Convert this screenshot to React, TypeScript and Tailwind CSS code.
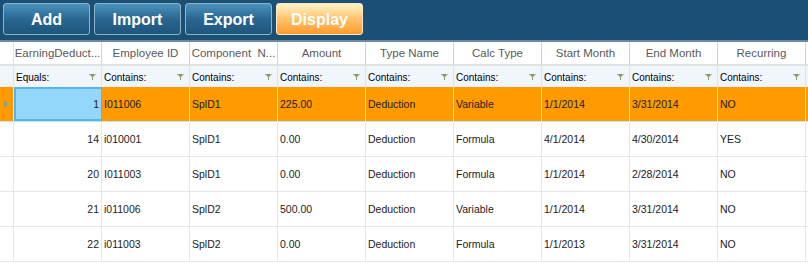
import React from "react";

const COLUMNS = [
  { title: "EarningDeduct...", op: "Equals:" },
  { title: "Employee ID", op: "Contains:" },
  { title: "Component  N...", op: "Contains:" },
  { title: "Amount", op: "Contains:" },
  { title: "Type Name", op: "Contains:" },
  { title: "Calc Type", op: "Contains:" },
  { title: "Start Month", op: "Contains:" },
  { title: "End Month", op: "Contains:" },
  { title: "Recurring", op: "Contains:" },
];

const ROWS = [
  ["1", "I011006", "SplD1", "225.00", "Deduction", "Variable", "1/1/2014", "3/31/2014", "NO"],
  ["14", "i010001", "SplD1", "0.00", "Deduction", "Formula", "4/1/2014", "4/30/2014", "YES"],
  ["20", "I011003", "SplD1", "0.00", "Deduction", "Formula", "1/1/2014", "2/28/2014", "NO"],
  ["21", "i011006", "SplD2", "500.00", "Deduction", "Variable", "1/1/2014", "3/31/2014", "NO"],
  ["22", "i011003", "SplD2", "0.00", "Deduction", "Formula", "1/1/2013", "3/31/2014", "NO"],
];

const GRID = "grid grid-cols-[14px_repeat(9,88px)_2px]";

function Funnel() {
  return (
    <svg width="7" height="6" viewBox="0 0 7 6" className="shrink-0">
      <path d="M0 0h7L4 3v3H3V3z" fill="#8c9a6c" />
    </svg>
  );
}

function ToolButton({ label, active }: { label: string; active?: boolean }) {
  return (
    <button
      className={
        active
          ? "h-[32px] w-[87px] rounded-[3px] border border-[#ffe7c2] bg-gradient-to-b from-[#fff4c8] via-[#ffc268] to-[#ff9a2a] pt-[1px] text-[16px] font-bold text-white"
          : "h-[32px] w-[87px] rounded-[3px] border border-[#8fb3cc] bg-gradient-to-b from-[#4a93bd] via-[#2a6791] to-[#1d557d] pt-[1px] text-[16px] font-bold text-white"
      }
    >
      {label}
    </button>
  );
}

export default function App() {
  return (
    <div
      className="h-[264px] w-[808px] overflow-hidden bg-white text-[10.5px] text-[#222]"
      style={{ fontFamily: '"Liberation Sans", Arial, sans-serif' }}
    >
      {/* toolbar */}
      <div className="flex h-[42px] gap-[4px] border-b-2 border-[#6d8aa0] bg-[#1b4f74] pl-[3px] pt-[3px]">
        <ToolButton label="Add" />
        <ToolButton label="Import" />
        <ToolButton label="Export" />
        <ToolButton label="Display" active />
      </div>

      {/* header */}
      <div className={`${GRID} h-[24px] border-b-2 border-[#e2e2e2] bg-white`}>
        <div className="border-r border-[#e2e2e2]" />
        {COLUMNS.map((c) => (
          <div
            key={c.title}
            className="flex items-center justify-center overflow-hidden whitespace-pre border-r border-[#d8d4c4] pt-[2px] text-[11.5px] text-[#5a5a5a]"
          >
            {c.title}
          </div>
        ))}
        <div />
      </div>

      {/* filter row */}
      <div className={`${GRID} h-[21px] bg-[#f1f6fc]`}>
        <div className="border-r border-[#e2e2e2]" />
        {COLUMNS.map((c) => (
          <div
            key={c.title}
            className="flex items-center justify-between border-r border-[#e2e2e2] pl-[2px] pr-[5px] pt-[1px] text-[10px] text-black"
          >
            <span>{c.op}</span>
            <Funnel />
          </div>
        ))}
        <div />
      </div>

      {/* data rows */}
      {ROWS.map((row, ri) => {
        const selected = ri === 0;
        return (
          <div
            key={row[0]}
            className={`${GRID} h-[35px] border-b ${
              selected ? "border-[#bfe6f7] bg-[#ff9a00]" : "border-[#e6e6e6] bg-white"
            }`}
          >
            <div className="flex items-center justify-center border-r border-[#e6e6e6]">
              {selected && (
                <svg width="5" height="8" viewBox="0 0 5 8">
                  <path d="M0 0l5 4-5 4z" fill="#8fa07e" />
                </svg>
              )}
            </div>
            {row.map((cell, ci) => (
              <div
                key={ci}
                className={`flex items-center border-r pt-[2px] ${
                  ci === 0 ? "justify-end pr-[2px]" : "pl-[2px]"
                } ${
                  selected && ci === 0
                    ? "border-2 border-[#58b4e6] bg-[#93d7fb]"
                    : "border-[#e6e6e6]"
                }`}
              >
                {cell}
              </div>
            ))}
            <div />
          </div>
        );
      })}
    </div>
  );
}
